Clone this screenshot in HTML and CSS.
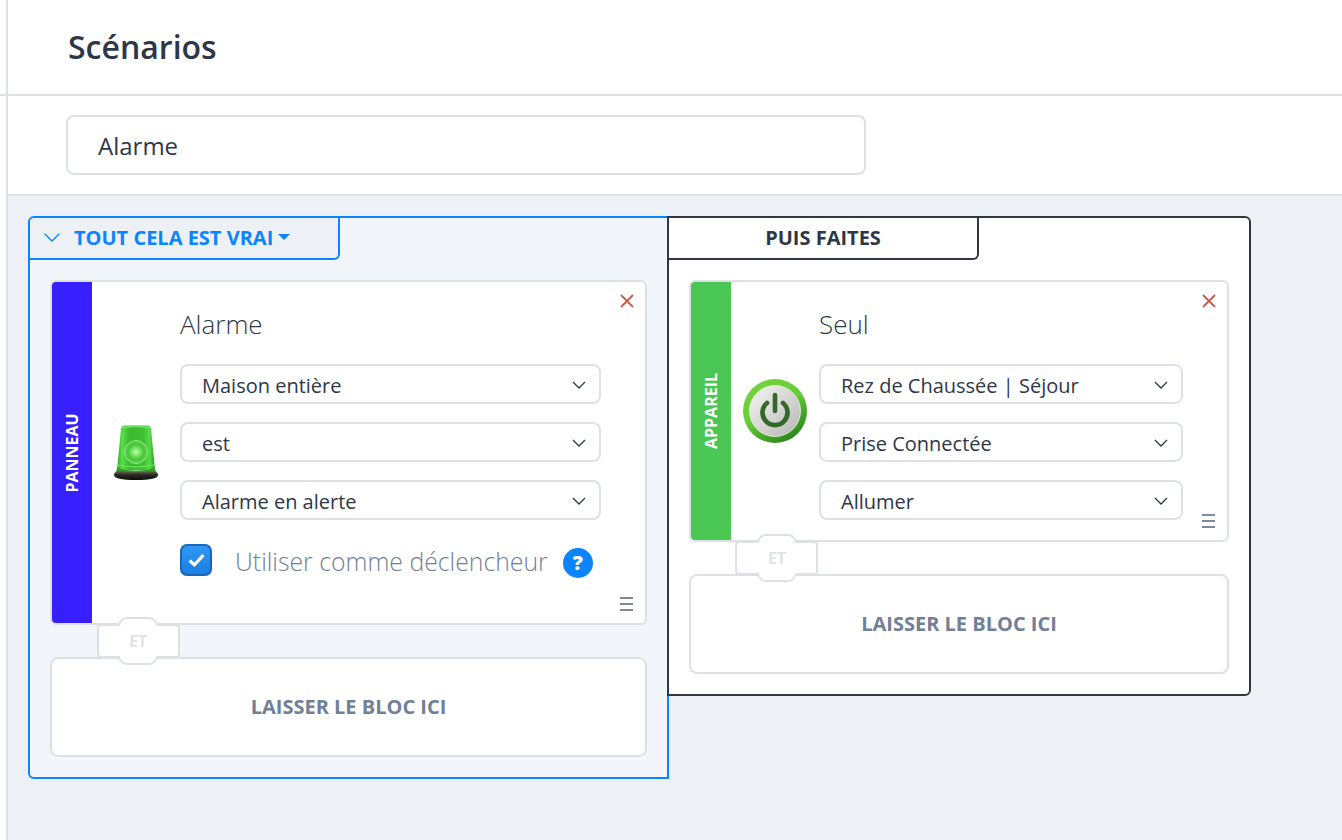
FILE: index.html
```html
<!DOCTYPE html>
<html lang="fr">
<head>
<meta charset="utf-8">
<title>Scénarios</title>
<link rel="stylesheet" href="styles.css">
</head>
<body>
<div class="app">
  <aside class="rail"><div class="rail-top"></div></aside>
  <main class="main">
    <header class="page-head"><h1 class="page-title">Scénarios</h1></header>
    <section class="name-row"><div class="name-input">Alarme</div></section>
    <section class="stage">
      <div class="panel panel-if">
        <div class="tab tab-if">
          <svg class="tab-chevron" width="16" height="9" viewBox="0 0 16 9"><path d="M.7.7L8 8l7.300-7.300" fill="none" stroke="#0a84ff" stroke-width="1.300"/></svg>
          <span>TOUT CELA EST VRAI</span><i class="caret"></i>
        </div>
        <div class="panel-body">
          <article class="card card-left">
            <div class="strip strip-blue"><span>PANNEAU</span></div>
            <div class="icon-cell">
              <svg width="48" height="58" viewBox="0 0 48 58">
                <defs>
                  <linearGradient id="domeG" x1="0" x2="1" y1="0" y2="0">
                    <stop offset="0" stop-color="#2fa826"/><stop offset=".14" stop-color="#5ae04a"/><stop offset=".32" stop-color="#3cb832"/><stop offset=".68" stop-color="#3fbe34"/><stop offset=".86" stop-color="#55dd45"/><stop offset="1" stop-color="#1f9a18"/>
                  </linearGradient>
                  <radialGradient id="lampG"><stop offset="0" stop-color="#f0ffe2"/><stop offset=".2" stop-color="#8cf576"/><stop offset=".7" stop-color="#46c23a"/><stop offset="1" stop-color="#6ad65c"/></radialGradient>
                  <linearGradient id="baseG" x1="0" x2="0" y1="0" y2="1"><stop offset="0" stop-color="#77775f"/><stop offset=".45" stop-color="#2b2b24"/><stop offset="1" stop-color="#0d0d0d"/></linearGradient>
                </defs>
                <path d="M9 5q0-3 3-3.500h24q3 .5 3 3.500l4 41H5z" fill="url(#domeG)"/>
                <path d="M10 4q14-3.500 28 0" fill="none" stroke="#6fe860" stroke-width="1.400"/>
                <circle cx="24" cy="28" r="11.500" fill="url(#lampG)" stroke="#92e884" stroke-width=".8"/>
                <path d="M6 41q18 4 36 0" fill="none" stroke="#6fe860" stroke-width="1"/>
                <path d="M5 44q19 5 38 0l1 4H4z" fill="#2aa322"/>
                <path d="M2 51q0-4 6-4.500 16 3 32 0 6 .5 6 4.500 0 5-22 5T2 51z" fill="url(#baseG)"/>
              </svg>
            </div>
            <div class="fields fields-left">
              <h2 class="block-title">Alarme</h2>
              <div class="select"><span>Maison entière</span><svg class="chev" width="14" height="8" viewBox="0 0 14 8"><path d="M1 1l6 6 6-6" fill="none" stroke="#2d3748" stroke-width="1.3"/></svg></div>
              <div class="select"><span>est</span><svg class="chev" width="14" height="8" viewBox="0 0 14 8"><path d="M1 1l6 6 6-6" fill="none" stroke="#2d3748" stroke-width="1.3"/></svg></div>
              <div class="select"><span>Alarme en alerte</span><svg class="chev" width="14" height="8" viewBox="0 0 14 8"><path d="M1 1l6 6 6-6" fill="none" stroke="#2d3748" stroke-width="1.3"/></svg></div>
              <div class="trigger">
                <span class="checkbox"><svg width="17" height="14" viewBox="0 0 16 13"><path d="M1.500 7l4.500 4 8.500-9" fill="none" stroke="#fff" stroke-width="3"/></svg></span>
                <span class="trigger-label">Utiliser comme déclencheur</span>
                <span class="help">?</span>
              </div>
            </div>
            <svg class="close" width="14" height="14" viewBox="0 0 14 14"><path d="M1 1l12 12M13 1L1 13" stroke="#c95a48" stroke-width="1.800"/></svg>
            <span class="handle"><i></i><i></i><i></i></span>
          </article>
          <div class="link link-left"><div class="link-box"></div><div class="link-bump"><span>ET</span></div></div>
          <div class="drop">LAISSER LE BLOC ICI</div>
        </div>
      </div>
      <div class="panel panel-then">
        <div class="tab tab-then">PUIS FAITES</div>
        <div class="panel-body">
          <article class="card card-right">
            <div class="strip strip-green"><span>APPAREIL</span></div>
            <div class="icon-cell">
              <svg width="64" height="64" viewBox="0 0 64 64">
                <defs>
                  <linearGradient id="ringG" x1="0" x2=".6" y1="0" y2="1"><stop offset="0" stop-color="#79d63e"/><stop offset=".55" stop-color="#66cc37"/><stop offset="1" stop-color="#2f8a1e"/></linearGradient>
                  <linearGradient id="faceG" x1="0" x2="1" y1="0" y2="1"><stop offset="0" stop-color="#f5f5f3"/><stop offset=".5" stop-color="#d6d6d4"/><stop offset="1" stop-color="#b5b5b3"/></linearGradient>
                </defs>
                <circle cx="32" cy="32" r="32" fill="url(#ringG)"/>
                <circle cx="32" cy="32" r="25.500" fill="url(#faceG)" stroke="#e8f5e0" stroke-width=".8"/>
                <path d="M24 24a12.500 12.500 0 1 0 16 0" fill="none" stroke="#35662b" stroke-width="4.600" stroke-linecap="round"/>
                <path d="M32 16v16" fill="none" stroke="#35662b" stroke-width="4.600" stroke-linecap="round"/>
              </svg>
            </div>
            <div class="fields fields-right">
              <h2 class="block-title">Seul</h2>
              <div class="select"><span>Rez de Chaussée | Séjour</span><svg class="chev" width="14" height="8" viewBox="0 0 14 8"><path d="M1 1l6 6 6-6" fill="none" stroke="#2d3748" stroke-width="1.3"/></svg></div>
              <div class="select"><span>Prise Connectée</span><svg class="chev" width="14" height="8" viewBox="0 0 14 8"><path d="M1 1l6 6 6-6" fill="none" stroke="#2d3748" stroke-width="1.3"/></svg></div>
              <div class="select"><span>Allumer</span><svg class="chev" width="14" height="8" viewBox="0 0 14 8"><path d="M1 1l6 6 6-6" fill="none" stroke="#2d3748" stroke-width="1.3"/></svg></div>
            </div>
            <svg class="close" width="14" height="14" viewBox="0 0 14 14"><path d="M1 1l12 12M13 1L1 13" stroke="#c95a48" stroke-width="1.800"/></svg>
            <span class="handle"><i></i><i></i><i></i></span>
          </article>
          <div class="link link-right"><div class="link-box"></div><div class="link-bump"><span>ET</span></div></div>
          <div class="drop">LAISSER LE BLOC ICI</div>
        </div>
      </div>
    </section>
  </main>
</div>
</body>
</html>
```

FILE: styles.css
```css
* { box-sizing: border-box; }
html, body { margin: 0; height: 100%; }
body {
  font-family: "Open Sans", "Liberation Sans", sans-serif;
  color: #2d3748;
  background: #fff;
  overflow: hidden;
}
.app { display: flex; height: 840px; }
.rail { width: 8px; flex: none; border-right: 2px solid #dde1e6; }
.rail-top { width: 8px; height: 96px; border-bottom: 2px solid #dde1e6; }
.main { flex: 1; display: flex; flex-direction: column; min-width: 0; }
.page-head {
  height: 96px;
  padding: 0 0 0 60px;
  border-bottom: 2px solid #dde1e6;
  display: flex;
  align-items: center;
}
.page-title { margin: 0; font-size: 32px; font-weight: 600; line-height: 40px; color: #2d3748; }
.name-row { height: 100px; padding: 19px 0 0 58px; border-bottom: 2px solid #dde1e6; }
.name-input {
  width: 800px;
  height: 60px;
  border: 2px solid #dde1e6;
  border-radius: 8px;
  padding: 0 30px;
  font-size: 24px;
  line-height: 58px;
}
.stage {
  flex: 1;
  background: #edf0f4;
  padding: 20px 0 0 20px;
  display: flex;
  align-items: flex-start;
}
.panel { border-style: solid; border-width: 2px; }
.panel-if {
  width: 641px;
  height: 563px;
  background: #f2f5f9;
  border-color: #0a84ff;
  border-radius: 6px 0 0 6px;
}
.panel-then {
  width: 584px;
  height: 480px;
  margin-left: -2px;
  position: relative;
  background: #fff;
  border-color: #2d3748;
  border-radius: 0 6px 6px 0;
}
.tab {
  width: 310px;
  height: 42px;
  padding-bottom: 2px;
  border-style: solid;
  border-width: 0 2px 2px 0;
  border-radius: 0 0 6px 0;
  font-size: 20px;
  font-weight: 700;
  display: flex;
  align-items: center;
}
.tab-if { background: #edf0f4; border-color: #0a84ff; color: #0a84ff; padding-left: 14px; border-top-left-radius: 5px; }
.tab-then { border-color: #2d3748; color: #2d3748; justify-content: center; }
.tab-chevron { margin-right: 14px; }
.caret {
  margin-left: 5px;
  border-style: solid;
  border-width: 6px 6px 0;
  border-color: #0a84ff transparent transparent;
}
.panel-body { padding: 20px 20px 0; }
.card {
  display: flex;
  position: relative;
  background: #fff;
  border: 2px solid #dde1e6;
  border-radius: 6px;
  overflow: hidden;
}
.card-left { height: 345px; }
.card-right { height: 262px; }
.strip {
  width: 40px;
  flex: none;
  display: flex;
  align-items: center;
  justify-content: center;
  color: #fff;
  font-size: 16px;
  font-weight: 700;
}
.strip span { display: block; transform: rotate(-90deg); white-space: nowrap; }
.strip-blue { background: #381fff; }
.strip-green { background: #4ac654; }
.icon-cell {
  width: 88px;
  flex: none;
  display: flex;
  align-items: center;
  justify-content: center;
}
.fields { flex: none; }
.fields-left { width: 421px; }
.fields-right { width: 364px; }
.block-title { margin: 24px 0 22px; font-size: 26px; font-weight: 300; line-height: 36px; color: #2d3748; }
.select {
  height: 40px;
  margin-bottom: 18px;
  padding: 2px 13px 0 20px;
  border: 2px solid #dde1e6;
  border-radius: 8px;
  display: flex;
  align-items: center;
  justify-content: space-between;
  font-size: 20px;
  background: #fff;
}
.trigger { display: flex; align-items: center; margin-top: 24px; }
.checkbox {
  width: 32px;
  height: 32px;
  flex: none;
  align-self: flex-start;
  border: 2px solid #1467bd;
  border-radius: 7px;
  background: linear-gradient(#2f97f5, #197fe4);
  display: flex;
  align-items: center;
  justify-content: center;
}
.trigger-label { margin-left: 23px; font-size: 24.800px; font-weight: 300; line-height: 34px; color: #718096; white-space: nowrap; }
.help {
  width: 30px;
  height: 30px;
  margin: 4px 0 0 15px;
  align-self: flex-start;
  flex: none;
  border-radius: 50%;
  background: #0a84ff;
  color: #fff;
  font-size: 20px;
  font-weight: 800;
  text-align: center;
  line-height: 30px;
}
.close { position: absolute; top: 12px; right: 11px; }
.handle { position: absolute; right: 12px; bottom: 12px; width: 13px; display: flex; flex-direction: column; gap: 4px; }
.handle i { display: block; height: 2px; background: #7d8a9c; }
.link { height: 32px; position: relative; z-index: 1; }
.link-box {
  position: absolute;
  top: -1px;
  width: 83px;
  height: 34px;
  background: #fff;
  border: 2px solid #dde1e6;
  border-radius: 4px;
}
.link-bump {
  position: absolute;
  top: -8px;
  height: 48px;
  width: 40px;
  background: #fff;
  border: 2px solid #dde1e6;
  border-radius: 9px;
  text-align: center;
  font-size: 16px;
  font-weight: 700;
  line-height: 45px;
  color: #dfe2e6;
}
.link-bump::before {
  content: "";
  position: absolute;
  left: -2px;
  right: -2px;
  top: 7px;
  height: 30px;
  background: #fff;
}
.link-bump span { position: relative; }
.link-left .link-box { left: 47px; }
.link-left .link-bump { left: 68px; }
.link-right .link-box { left: 46px; }
.link-right .link-bump { left: 68px; }
.drop {
  height: 100px;
  padding-bottom: 2px;
  background: #fff;
  border: 2px solid #dde1e6;
  border-radius: 8px;
  display: flex;
  align-items: center;
  justify-content: center;
  font-size: 20px;
  font-weight: 700;
  color: #718096;
}
```
